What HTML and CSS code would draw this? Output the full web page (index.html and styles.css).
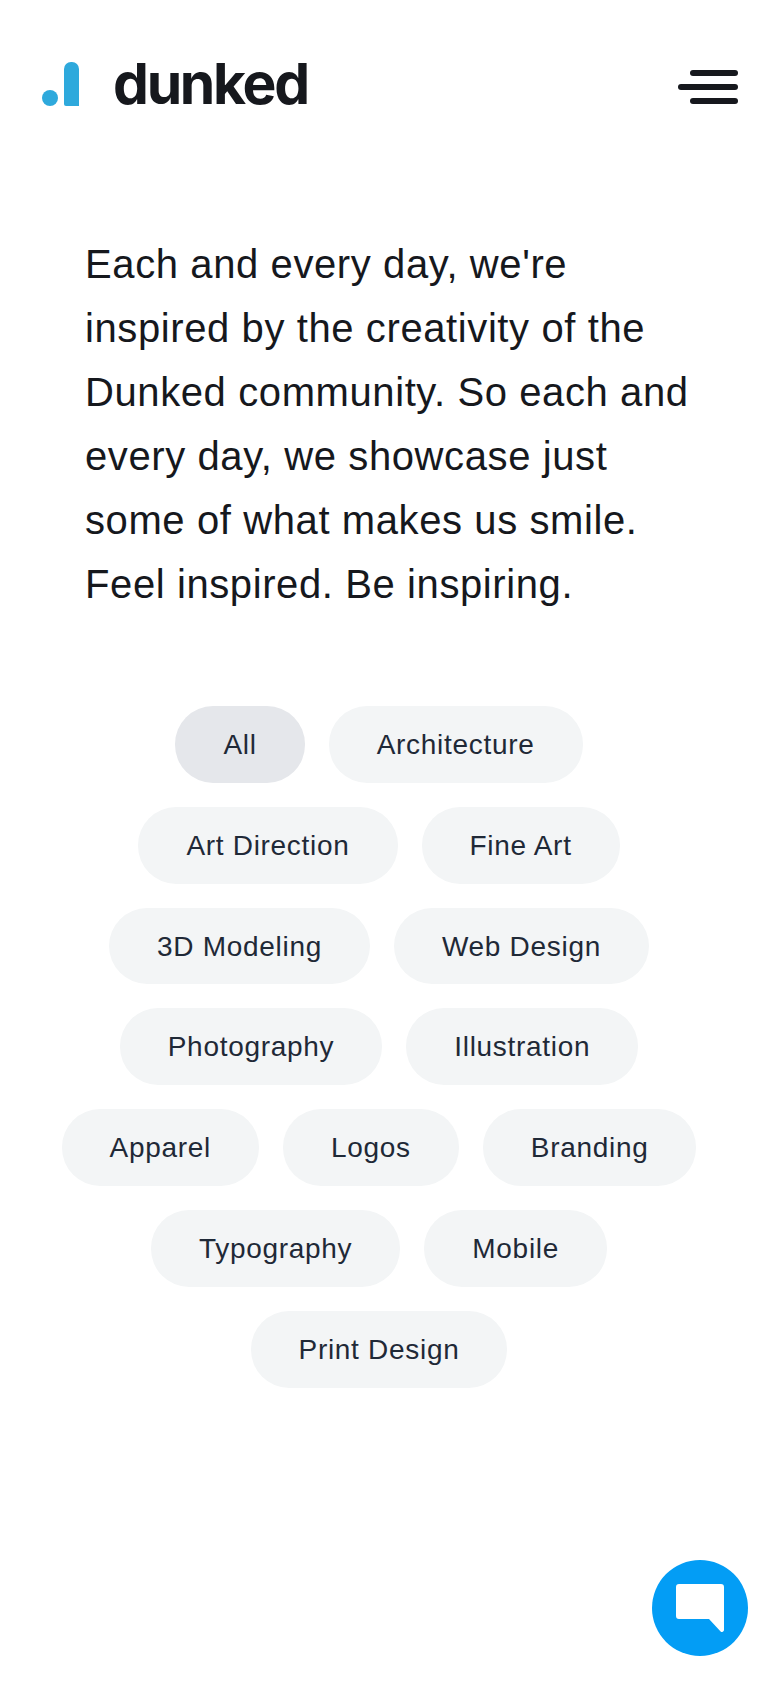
FILE: index.html
```html
<!DOCTYPE html>
<html lang="en">
<head>
    <meta charset="UTF-8">
    <meta name="viewport" content="width=device-width, initial-scale=1.0">
    <title>Dunked</title>
    <link rel="stylesheet" href="styles.css">
</head>
<body>

    <header class="site-header">
        <a class="logo" href="#">
            <svg class="logo-mark" width="38" height="44" viewBox="0 0 38 44">
                <circle cx="8" cy="36" r="8" fill="#2ea9dc"/>
                <path d="M22 7a7 7 0 0 1 7-7h1a7 7 0 0 1 7 7v37H24a2 2 0 0 1-2-2z" fill="#2ea9dc"/>
            </svg>
            <span class="logo-text">dunked</span>
        </a>
        <button class="menu-button" type="button" aria-label="Menu">
            <span class="bar"></span>
            <span class="bar bar-long"></span>
            <span class="bar"></span>
        </button>
    </header>

    <p class="intro">Each and every day, we're inspired by the creativity of the Dunked community. So each and every day, we showcase just some of what makes us smile. Feel inspired. Be inspiring.</p>

    <nav class="filters">
        <a class="pill active" href="#">All</a>
        <a class="pill" href="#">Architecture</a>
        <a class="pill" href="#">Art Direction</a>
        <a class="pill" href="#">Fine Art</a>
        <a class="pill" href="#">3D Modeling</a>
        <a class="pill" href="#">Web Design</a>
        <a class="pill" href="#">Photography</a>
        <a class="pill" href="#">Illustration</a>
        <a class="pill" href="#">Apparel</a>
        <a class="pill" href="#">Logos</a>
        <a class="pill" href="#">Branding</a>
        <a class="pill" href="#">Typography</a>
        <a class="pill" href="#">Mobile</a>
        <a class="pill" href="#">Print Design</a>
    </nav>

    <button class="chat-button" type="button" aria-label="Chat">
        <svg width="48" height="48" viewBox="0 0 48 48">
            <path d="M3 0h42a3 3 0 0 1 3 3v43a2 2 0 0 1-3.4 1.4L33 35H3a3 3 0 0 1-3-3V3a3 3 0 0 1 3-3z" fill="#fff"/>
        </svg>
    </button>

</body>
</html>
```

FILE: styles.css
```css
* {
    box-sizing: border-box;
}

html, body {
    margin: 0;
    padding: 0;
}

body {
    min-height: 1688px;
    background-color: #fff;
    font-family: 'Liberation Sans', Arial, sans-serif;
    color: #16181d;
}

a {
    text-decoration: none;
}

.site-header {
    display: flex;
    justify-content: space-between;
    align-items: center;
    height: 124px;
    padding: 44px 42px 0;
}

.logo {
    display: flex;
    align-items: center;
    gap: 33px;
    color: #16181d;
}

.logo-text {
    font-family: 'Inter', sans-serif;
    font-size: 57px;
    font-weight: 700;
    line-height: 60px;
    letter-spacing: -2.3px;
}

.menu-button {
    display: flex;
    flex-direction: column;
    align-items: flex-end;
    gap: 8px;
    width: 60px;
    margin-top: 6px;
    padding: 0;
    border: none;
    background: none;
}

.bar {
    display: block;
    width: 48px;
    height: 6px;
    border-radius: 3px;
    background-color: #16181d;
}

.bar-long {
    width: 60px;
}

.intro {
    margin: 108px 64px 0 85px;
    font-size: 40px;
    line-height: 64px;
    letter-spacing: 0.6px;
    color: #16181d;
}

.filters {
    display: flex;
    flex-wrap: wrap;
    justify-content: center;
    gap: 24px;
    margin-top: 90px;
    padding: 0 63px 0 41px;
}

.pill {
    padding: 0 48px;
    height: 76.8px;
    line-height: 77px;
    border-radius: 38px;
    background-color: #f3f5f6;
    font-size: 28px;
    letter-spacing: 0.7px;
    color: #1f2937;
}

.pill.active {
    background-color: #e5e7eb;
}

.chat-button {
    position: fixed;
    right: 32px;
    bottom: 32px;
    display: flex;
    align-items: center;
    justify-content: center;
    width: 96px;
    height: 96px;
    padding: 0;
    border: none;
    border-radius: 50%;
    background-color: #039df5;
}
```
